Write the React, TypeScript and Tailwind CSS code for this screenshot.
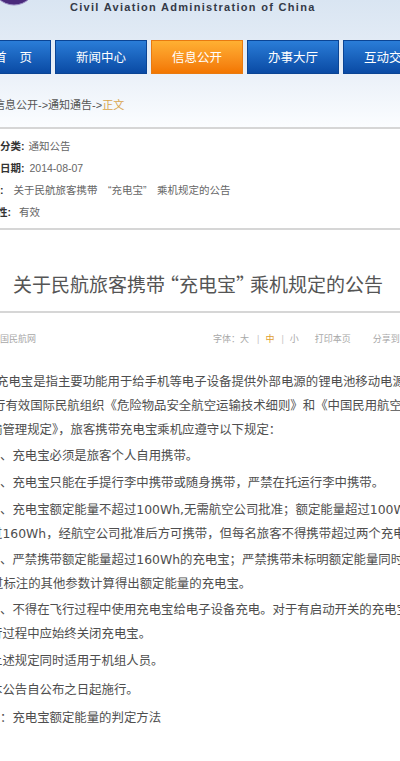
import React from "react";

const Line = () => <div className="h-[2px] bg-[#d6d6d6]" />;

function NavBtn({ label, active, first }: { label: string; active?: boolean; first?: boolean }) {
  return (
    <div
      className={
        "w-[92px] h-[34px] shrink-0 flex items-center justify-center text-[12.5px] text-white border " +
        (active
          ? "bg-linear-to-b from-[#ffb032] to-[#f27600] border-[#e87a10]"
          : "bg-linear-to-b from-[#2a7dd8] to-[#0a4aa4] border-[#0a4494]") +
        (first ? " pl-[16px] gap-[13px]" : "")
      }
    >
      {first ? (
        <>
          <span>首</span>
          <span>页</span>
        </>
      ) : (
        label
      )}
    </div>
  );
}

function BodyLine({ text, off, mt }: { text: React.ReactNode; off?: string; mt?: string }) {
  return <div className={"whitespace-nowrap leading-[24px] " + (off ?? "") + " " + (mt ?? "")}>{text}</div>;
}

export default function App() {
  return (
    <div className="w-[400px] h-[761px] overflow-hidden bg-white text-[#555] font-['Noto_Sans_CJK_SC',sans-serif]">
      {/* header */}
      <div className="h-[127px] bg-linear-to-b from-[#d9e5f2] via-[#e7eef7] to-[#fbfdff] overflow-hidden">
        <div className="flex h-[14px]">
          <svg width="30" height="14" viewBox="0 0 30 14" className="shrink-0">
            <circle cx="14" cy="-17" r="22" fill="#4a2a7c" stroke="#9a8cc4" strokeWidth="1" />
          </svg>
          <div className="ml-[40px] leading-[14px] text-[11px] font-bold tracking-[1.3px] text-[#343a48] whitespace-nowrap font-['Liberation_Sans',sans-serif]">
            Civil Aviation Administration of China
          </div>
        </div>
        <div className="mt-[26px] flex gap-[4px] -ml-[41px]">
          <NavBtn label="首页" first />
          <NavBtn label="新闻中心" />
          <NavBtn label="信息公开" active />
          <NavBtn label="办事大厅" />
          <NavBtn label="互动交流" />
        </div>
        <div className="mt-[21px] leading-[20px] text-[11px] -ml-[6px] whitespace-nowrap font-['Liberation_Sans','Noto_Sans_CJK_SC',sans-serif] text-[#555]">
          信息公开-&gt;通知通告-&gt;<span className="text-[#d9a54a]">正文</span>
        </div>
      </div>
      <Line />
      {/* info */}
      <div className="pt-[6px] text-[10.5px] leading-[22px] font-['Liberation_Sans','Noto_Sans_CJK_SC',sans-serif] whitespace-nowrap">
        <div className="flex">
          <span className="font-bold text-[#333]">分类:</span>
          <span className="ml-[4px] text-[#666]">通知公告</span>
        </div>
        <div className="flex">
          <span className="font-bold text-[#333]">日期:</span>
          <span className="ml-[5px] text-[#666]">2014-08-07</span>
        </div>
        <div className="flex">
          <span className="font-bold text-[#333] -ml-[21px]">标题:</span>
          <span className="ml-[10px] text-[#666] flex">
            关于民航旅客携带
            <span className="w-[14px] flex justify-end overflow-hidden">“</span>
            充电宝
            <span className="w-[14px] flex justify-start overflow-hidden">”</span>
            乘机规定的公告
          </span>
        </div>
        <div className="flex">
          <span className="font-bold text-[#333] -ml-[24px]">有效性:</span>
          <span className="ml-[8px] text-[#666]">有效</span>
        </div>
      </div>
      <div className="mt-[5px]">
        <Line />
      </div>
      {/* title */}
      <div className="pt-[40px] leading-[28px] text-[19px] text-[#555] pl-[13px] whitespace-nowrap flex">
        关于民航旅客携带
        <span className="w-[14px] flex justify-end overflow-hidden">“</span>
        充电宝
        <span className="w-[14px] flex justify-start overflow-hidden">”</span>
        乘机规定的公告
      </div>
      <div className="mt-[13px]">
        <Line />
      </div>
      {/* meta */}
      <div className="pt-[18px] leading-[16px] text-[9px] text-[#a8a8a8] flex whitespace-nowrap">
        <span className="w-[222px] -ml-[9px] shrink-0">中国民航网</span>
        <span>字体：</span>
        <span>大</span>
        <span className="ml-[8px] text-[#c4c4c4] font-['Liberation_Sans',sans-serif]">|</span>
        <span className="ml-[6px] text-[#e0a030]">中</span>
        <span className="ml-[7px] text-[#c4c4c4] font-['Liberation_Sans',sans-serif]">|</span>
        <span className="ml-[6px]">小</span>
        <span className="ml-[16px]">打印本页</span>
        <span className="ml-[22px]">分享到</span>
      </div>
      {/* body */}
      <div className="mt-[23px] text-[12.4px] text-[#4e4e4e] font-['DejaVu_Sans','Noto_Sans_CJK_SC',sans-serif]">
        <BodyLine off="-ml-[4px]" text="充电宝是指主要功能用于给手机等电子设备提供外部电源的锂电池移动电源。根据现" />
        <BodyLine off="-ml-[7px]" text="行有效国际民航组织《危险物品安全航空运输技术细则》和《中国民用航空危险品运" />
        <BodyLine off="-ml-[10px]" text="输管理规定》，旅客携带充电宝乘机应遵守以下规定：" />
        <BodyLine mt="mt-[2px]" text="、充电宝必须是旅客个人自用携带。" />
        <BodyLine mt="mt-[3px]" text="、充电宝只能在手提行李中携带或随身携带，严禁在托运行李中携带。" />
        <BodyLine mt="mt-[3px]" text="、充电宝额定能量不超过100Wh,无需航空公司批准；额定能量超过100Wh但不超过" />
        <BodyLine off="-ml-[10px]" text="过160Wh，经航空公司批准后方可携带，但每名旅客不得携带超过两个充电宝。" />
        <BodyLine mt="mt-[2px]" text="、严禁携带额定能量超过160Wh的充电宝；严禁携带未标明额定能量同时也未能通" />
        <BodyLine off="-ml-[9px]" text="过标注的其他参数计算得出额定能量的充电宝。" />
        <BodyLine mt="mt-[2px]" text="、不得在飞行过程中使用充电宝给电子设备充电。对于有启动开关的充电宝，在飞" />
        <BodyLine off="-ml-[10px]" text="行过程中应始终关闭充电宝。" />
        <BodyLine off="-ml-[10px]" mt="mt-[3px]" text="上述规定同时适用于机组人员。" />
        <BodyLine off="-ml-[10px]" mt="mt-[5px]" text="本公告自公布之日起施行。" />
        <BodyLine mt="mt-[4px]" text="：充电宝额定能量的判定方法" />
      </div>
    </div>
  );
}
